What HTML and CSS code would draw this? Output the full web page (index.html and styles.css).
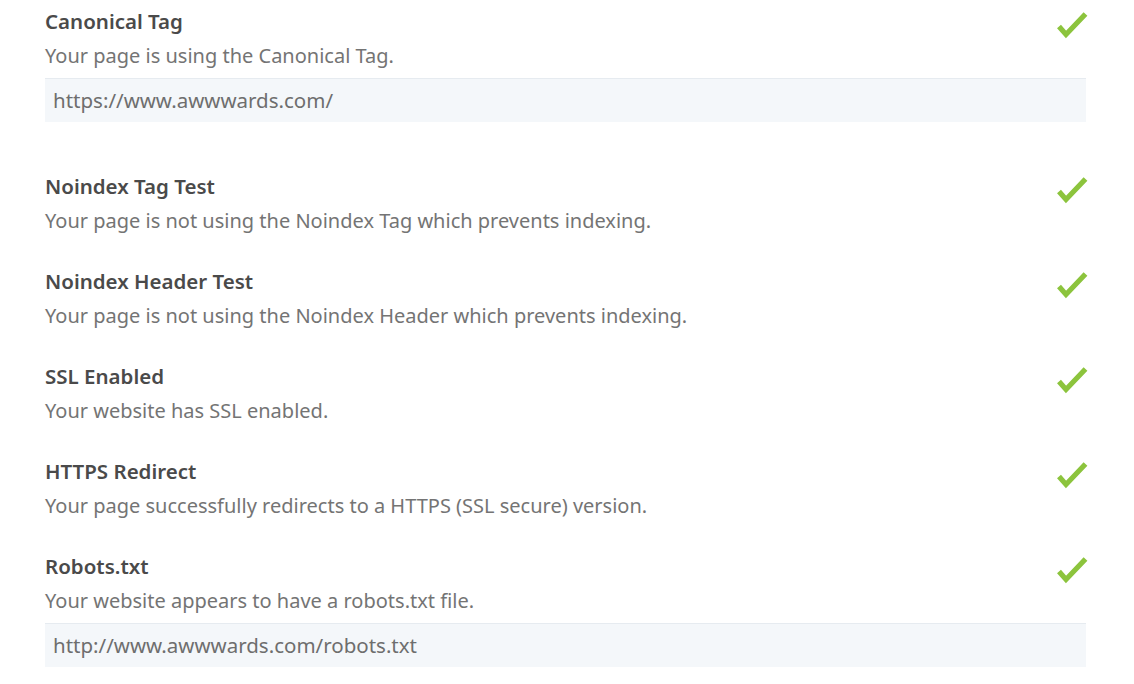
FILE: index.html
```html
<!DOCTYPE html>
<html>
<head>
<meta charset="utf-8">
<link rel="stylesheet" href="styles.css">
</head>
<body>
<div class="list">
  <div class="item">
    <div class="head">
      <div class="text">
        <div class="title">Canonical Tag</div>
        <div class="desc">Your page is using the Canonical Tag.</div>
      </div>
      <svg class="check" viewBox="0 0 32 30" width="32" height="30"><path d="M3 15.5 L10 23.5 L29.5 3" fill="none" stroke="#8cc43d" stroke-width="5.2"/></svg>
    </div>
    <div class="box">https://www.awwwards.com/</div>
  </div>
  <div class="item">
    <div class="head">
      <div class="text">
        <div class="title">Noindex Tag Test</div>
        <div class="desc">Your page is not using the Noindex Tag which prevents indexing.</div>
      </div>
      <svg class="check" viewBox="0 0 32 30" width="32" height="30"><path d="M3 15.5 L10 23.5 L29.5 3" fill="none" stroke="#8cc43d" stroke-width="5.2"/></svg>
    </div>
  </div>
  <div class="item">
    <div class="head">
      <div class="text">
        <div class="title">Noindex Header Test</div>
        <div class="desc">Your page is not using the Noindex Header which prevents indexing.</div>
      </div>
      <svg class="check" viewBox="0 0 32 30" width="32" height="30"><path d="M3 15.5 L10 23.5 L29.5 3" fill="none" stroke="#8cc43d" stroke-width="5.2"/></svg>
    </div>
  </div>
  <div class="item">
    <div class="head">
      <div class="text">
        <div class="title">SSL Enabled</div>
        <div class="desc">Your website has SSL enabled.</div>
      </div>
      <svg class="check" viewBox="0 0 32 30" width="32" height="30"><path d="M3 15.5 L10 23.5 L29.5 3" fill="none" stroke="#8cc43d" stroke-width="5.2"/></svg>
    </div>
  </div>
  <div class="item">
    <div class="head">
      <div class="text">
        <div class="title">HTTPS Redirect</div>
        <div class="desc">Your page successfully redirects to a HTTPS (SSL secure) version.</div>
      </div>
      <svg class="check" viewBox="0 0 32 30" width="32" height="30"><path d="M3 15.5 L10 23.5 L29.5 3" fill="none" stroke="#8cc43d" stroke-width="5.2"/></svg>
    </div>
  </div>
  <div class="item">
    <div class="head">
      <div class="text">
        <div class="title">Robots.txt</div>
        <div class="desc">Your website appears to have a robots.txt file.</div>
      </div>
      <svg class="check" viewBox="0 0 32 30" width="32" height="30"><path d="M3 15.5 L10 23.5 L29.5 3" fill="none" stroke="#8cc43d" stroke-width="5.2"/></svg>
    </div>
    <div class="box">http://www.awwwards.com/robots.txt</div>
  </div>
</div>
</body>
</html>
```

FILE: styles.css
```css
html, body {
  margin: 0;
  padding: 0;
  background: #ffffff;
}
body {
  font-family: "Noto Sans", "Open Sans", sans-serif;
  width: 1134px;
  height: 684px;
  overflow: hidden;
}
.list {
  margin: 6px 48px 0 45px;
  display: flex;
  flex-direction: column;
  gap: 30px;
}
.item {
  display: flex;
  flex-direction: column;
}
.item:first-child {
  margin-bottom: 19px;
}
.head {
  display: flex;
  justify-content: space-between;
  align-items: flex-start;
}
.title {
  font-size: 20.5px;
  font-weight: 600;
  line-height: 30px;
  color: #4a4a4a;
}
.desc {
  margin-top: 5px;
  font-size: 20px;
  line-height: 30px;
  color: #747474;
}
.check {
  margin-top: 5px;
  margin-right: -2px;
  display: block;
}
.box {
  margin-top: 7px;
  height: 43px;
  border-top: 1px solid #e6ebf0;
  background: #f4f7fa;
  padding: 0 8px;
  font-size: 20.5px;
  line-height: 43px;
  color: #6e6e6e;
}
```
